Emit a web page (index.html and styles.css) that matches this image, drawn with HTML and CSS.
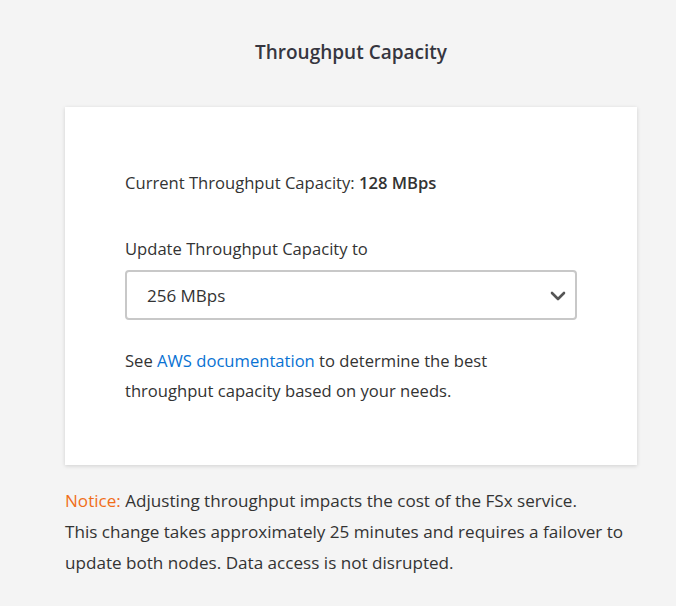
FILE: index.html
```html
<!DOCTYPE html>
<html lang="en">
<head>
    <meta charset="UTF-8">
    <meta name="viewport" content="width=device-width, initial-scale=1.0">
    <title>Throughput Capacity</title>
    <link rel="stylesheet" href="styles.css">
</head>
<body>
    <div class="wrapper">
        <h2 class="title">Throughput Capacity</h2>
        <div class="card">
            <p class="current">Current Throughput Capacity: <strong>128 MBps</strong></p>
            <label class="field-label" for="capacity">Update Throughput Capacity to</label>
            <div class="select-box">
                <select id="capacity">
                    <option>256 MBps</option>
                    <option>512 MBps</option>
                    <option>1024 MBps</option>
                </select>
                <svg class="chevron" width="16" height="10" viewBox="0 0 16 10">
                    <path d="M2 2 L8 8 L14 2" fill="none" stroke="#555" stroke-width="2.6" stroke-linecap="round" stroke-linejoin="round"/>
                </svg>
            </div>
            <p class="help">See <a href="#">AWS documentation</a> to determine the best throughput capacity based on your needs.</p>
        </div>
        <p class="notice"><span class="notice-tag">Notice:</span> Adjusting throughput impacts the cost of the FSx service.<br>
            This change takes approximately 25 minutes and requires a failover to<br>
            update both nodes. Data access is not disrupted.</p>
    </div>
</body>
</html>
```

FILE: styles.css
```css
body, h2, p {
    margin: 0;
    padding: 0;
}

body {
    font-family: "Open Sans", "Noto Sans", sans-serif;
    background-color: #f4f4f4;
    color: #333;
}

.wrapper {
    margin-left: 65px;
    width: 572px;
    padding-top: 38px;
}

.title {
    text-align: center;
    font-size: 19px;
    font-weight: 600;
    line-height: 28px;
    color: #363640;
    margin-bottom: 41px;
}

.card {
    background: #fff;
    box-shadow: 0 1px 4px rgba(0, 0, 0, 0.15);
    padding: 62px 60px 62px 60px;
    box-sizing: border-box;
    height: 358px;
}

.current {
    font-size: 16.6px;
    line-height: 28px;
    margin-bottom: 38px;
}

.current strong {
    font-weight: 600;
}

.field-label {
    display: block;
    font-size: 16.6px;
    line-height: 28px;
    margin-bottom: 7px;
}

.select-box {
    position: relative;
    width: 452px;
    margin-bottom: 26px;
}

.select-box select {
    appearance: none;
    -webkit-appearance: none;
    width: 100%;
    height: 50px;
    border: 2px solid #c8c8c8;
    border-radius: 4px;
    background: #fff;
    padding: 0 20px;
    font-family: inherit;
    font-size: 17px;
    color: #333;
    outline: none;
}

.chevron {
    position: absolute;
    right: 11px;
    top: 21px;
    pointer-events: none;
}

.help {
    font-size: 16.6px;
    line-height: 30px;
}

.help a {
    color: #0972d3;
    text-decoration: none;
}

.notice {
    margin-top: 20px;
    font-size: 17.1px;
    font-weight: 500;
    line-height: 31px;
    color: #333;
    white-space: nowrap;
}

.notice-tag {
    color: #f06e1a;
}
```
